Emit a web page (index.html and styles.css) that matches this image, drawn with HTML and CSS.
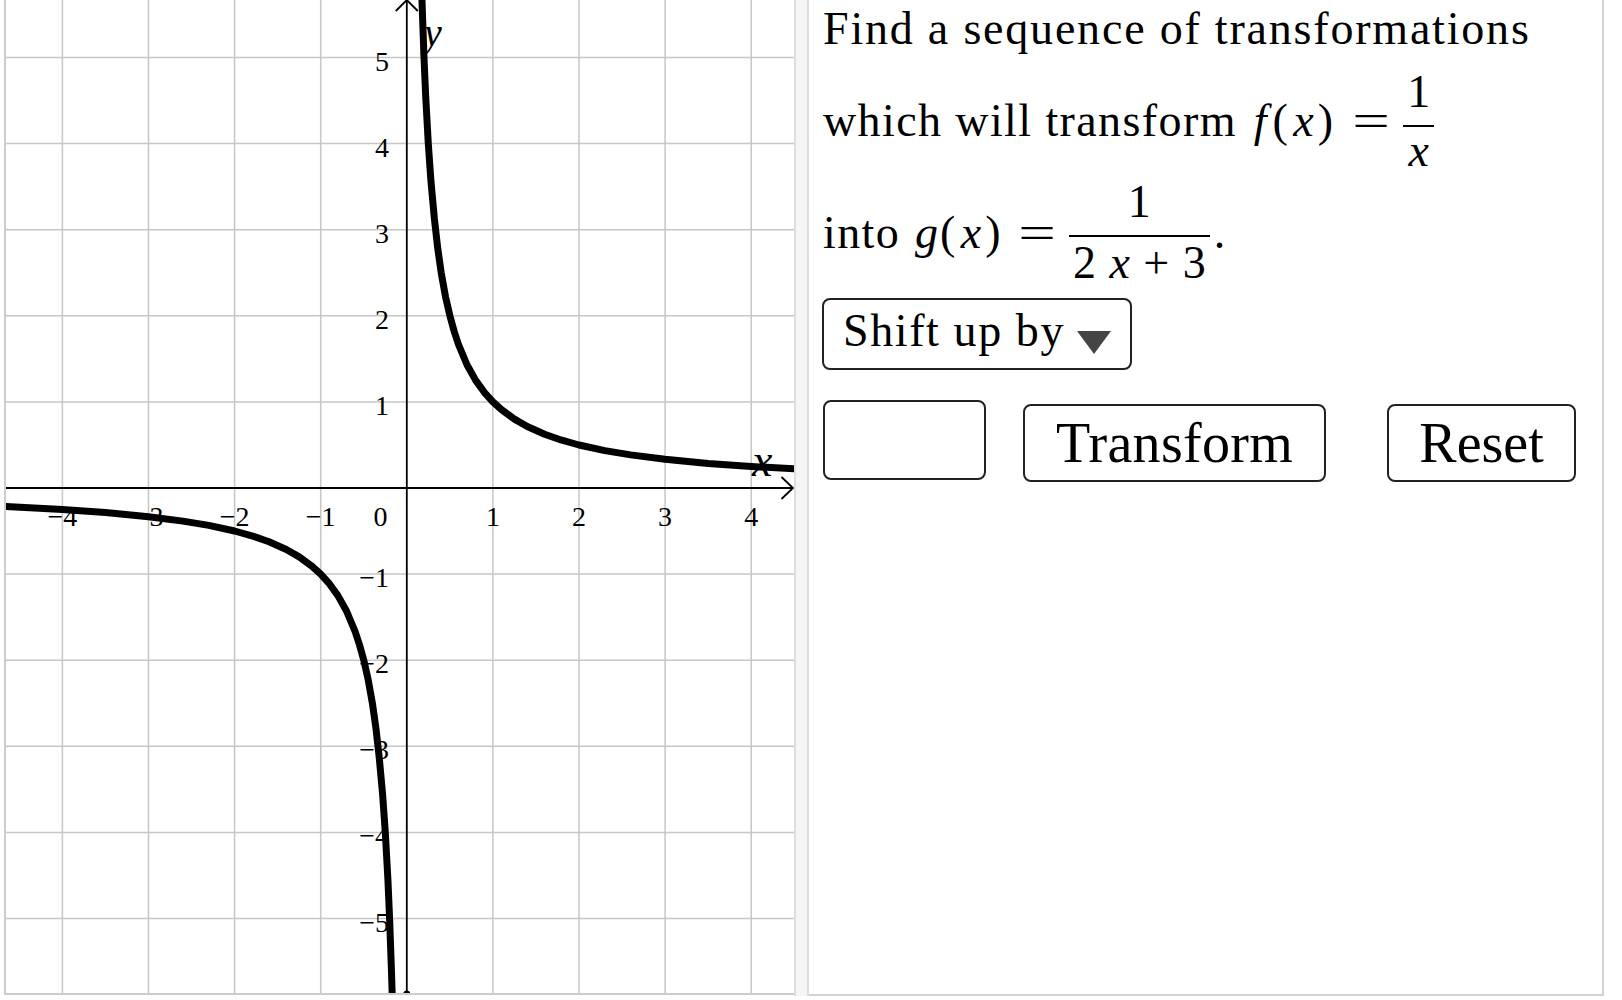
FILE: index.html
```html
<!DOCTYPE html>
<html>
<head>
<meta charset="utf-8">
<link rel="stylesheet" href="styles.css">
</head>
<body>
<div class="page">
  <div class="board">
    <svg class="board-svg" width="794" height="996" viewBox="0 0 794 996">
      <defs>
        <clipPath id="clip"><rect x="6" y="0" width="788" height="993"/></clipPath>
      </defs>
      <g clip-path="url(#clip)">
        <g class="grid">
          <line x1="62.4" y1="0" x2="62.4" y2="996"/>
          <line x1="148.5" y1="0" x2="148.5" y2="996"/>
          <line x1="234.6" y1="0" x2="234.6" y2="996"/>
          <line x1="320.7" y1="0" x2="320.7" y2="996"/>
          <line x1="492.9" y1="0" x2="492.9" y2="996"/>
          <line x1="579.0" y1="0" x2="579.0" y2="996"/>
          <line x1="665.1" y1="0" x2="665.1" y2="996"/>
          <line x1="751.2" y1="0" x2="751.2" y2="996"/>
          <line x1="0" y1="57.5" x2="794" y2="57.5"/>
          <line x1="0" y1="143.6" x2="794" y2="143.6"/>
          <line x1="0" y1="229.7" x2="794" y2="229.7"/>
          <line x1="0" y1="315.8" x2="794" y2="315.8"/>
          <line x1="0" y1="401.9" x2="794" y2="401.9"/>
          <line x1="0" y1="574.1" x2="794" y2="574.1"/>
          <line x1="0" y1="660.2" x2="794" y2="660.2"/>
          <line x1="0" y1="746.3" x2="794" y2="746.3"/>
          <line x1="0" y1="832.4" x2="794" y2="832.4"/>
          <line x1="0" y1="918.5" x2="794" y2="918.5"/>
        </g>
        <g class="axis">
          <line x1="0" y1="488" x2="793" y2="488"/>
          <polyline points="781.5,477 793,488 781.5,499"/>
          <line x1="406.8" y1="0" x2="406.8" y2="996"/>
          <polyline points="395.8,11 406.8,0 417.8,11"/>
          <circle class="dot" cx="406.8" cy="994" r="3.5"/>
        </g>
        <g class="ticks">
          <text x="389" y="70.5" text-anchor="end">5</text>
          <text x="389" y="156.6" text-anchor="end">4</text>
          <text x="389" y="242.7" text-anchor="end">3</text>
          <text x="389" y="328.8" text-anchor="end">2</text>
          <text x="389" y="414.9" text-anchor="end">1</text>
          <text x="389" y="587.1" text-anchor="end">−1</text>
          <text x="389" y="673.2" text-anchor="end">−2</text>
          <text x="389" y="759.3" text-anchor="end">−3</text>
          <text x="389" y="845.4" text-anchor="end">−4</text>
          <text x="389" y="931.5" text-anchor="end">−5</text>
          <text x="62.4" y="526" text-anchor="middle">−4</text>
          <text x="148.5" y="526" text-anchor="middle">−3</text>
          <text x="234.6" y="526" text-anchor="middle">−2</text>
          <text x="320.7" y="526" text-anchor="middle">−1</text>
          <text x="380.5" y="526" text-anchor="middle">0</text>
          <text x="492.9" y="526" text-anchor="middle">1</text>
          <text x="579.0" y="526" text-anchor="middle">2</text>
          <text x="665.1" y="526" text-anchor="middle">3</text>
          <text x="751.2" y="526" text-anchor="middle">4</text>
        </g>
        <text class="axis-label ylab" x="424" y="46">y</text>
        <text class="axis-label xlab" x="752" y="476">x</text>
        <g class="curve">
          <polyline points="421.4,-18.5 422.3,9.7 424.0,57.5 425.7,96.6 428.3,143.6 430.9,180.5 434.4,218.9 437.8,248.8 441.2,272.8 445.5,296.7 449.9,315.8 454.2,331.5 458.5,344.5 467.1,365.0 475.7,380.4 484.3,392.3 492.9,401.9 501.5,409.7 514.4,419.1 527.3,426.5 544.6,434.2 561.8,440.2 579.0,445.0 604.8,450.6 630.7,454.9 665.1,459.3 708.2,463.4 751.2,466.5 802.9,469.3"/>
          <polyline points="2.1,506.3 10.7,506.7 62.4,509.5 105.5,512.6 148.5,516.7 182.9,521.1 208.8,525.4 234.6,531.0 251.8,535.8 269.0,541.8 286.3,549.5 299.2,556.9 312.1,566.3 320.7,574.1 329.3,583.7 337.9,595.6 346.5,611.0 355.1,631.5 359.4,644.5 363.8,660.2 368.1,679.3 372.4,703.3 375.8,727.2 379.2,757.1 382.7,795.5 385.3,832.4 387.9,879.4 389.6,918.5 391.3,966.3 392.2,994.5 393.0,1026"/>
        </g>
      </g>
      <line class="frame" x1="5" y1="0" x2="5" y2="994"/>
      <line class="frame" x1="4" y1="994" x2="794" y2="994"/>
    </svg>
  </div>
  <div class="divider"></div>
  <div class="panel">
    <div class="line l1">Find a sequence of transformations</div>
    <div class="line l2">which will transform <span class="mi mf">f</span>(<span class="mi mx">x</span>)<span class="eq eq1">=</span><span class="frac fa"><span class="num">1</span><span class="den"><span class="mi">x</span></span></span></div>
    <div class="line l3">into <span class="mi mg">g</span>(<span class="mi mx">x</span>)<span class="eq eq2">=</span><span class="frac fb"><span class="num">1</span><span class="den">2 <span class="mi">x</span> + 3</span></span>.</div>
    <div class="select"><span class="select-text">Shift up by</span><span class="caret"></span></div>
    <div class="controls">
      <div class="input"></div>
      <button class="btn transform">Transform</button>
      <button class="btn reset">Reset</button>
    </div>
  </div>
</div>
</body>
</html>
```
FILE: styles.css
```css
html, body {
  margin: 0;
  padding: 0;
  background: #ffffff;
}

.page {
  display: flex;
  width: 1604px;
  height: 996px;
}

.board {
  flex: 0 0 794px;
  height: 996px;
}

.board-svg {
  display: block;
}

.grid line {
  stroke: #c6c6c6;
  stroke-width: 1.5;
}

.axis line,
.axis polyline {
  stroke: #000;
  stroke-width: 1.8;
  fill: none;
}

.axis .dot {
  fill: #000;
}

.ticks text {
  font-family: "Liberation Serif", serif;
  font-size: 28px;
  fill: #000;
}

.axis-label {
  font-family: "Liberation Serif", serif;
  font-style: italic;
  fill: #000;
}

.ylab { font-size: 40px; }
.xlab { font-size: 46px; }

.curve polyline {
  fill: none;
  stroke: #000;
  stroke-width: 7;
  stroke-linejoin: round;
}

.frame {
  stroke: #cccccc;
  stroke-width: 2;
}

.divider {
  flex: 0 0 15px;
  box-sizing: border-box;
  height: 996px;
  background: #f5f5f5;
  border-left: 2px solid #dedede;
  border-right: 2px solid #dedede;
}

.panel {
  flex: 0 0 795px;
  box-sizing: border-box;
  height: 996px;
  border-right: 2px solid #d2d2d2;
  border-bottom: 2px solid #d2d2d2;
  padding: 6px 0 0 14px;
  font-family: "Liberation Serif", serif;
  font-size: 46px;
  color: #000;
}

.line {
  line-height: 46px;
  letter-spacing: 1.4px;
  white-space: nowrap;
}

.l1 { letter-spacing: 1.8px; }
.l2 { margin-top: 16.5px; }
.l3 { margin-top: 5px; }

.mi {
  font-style: italic;
  letter-spacing: 0;
}

.mf { margin: 0 6px 0 4px; }
.mg { margin: 0 2px 0 2px; }
.mx { margin: 0 4px; }

.eq {
  display: inline-block;
  transform: scaleX(1.45);
  letter-spacing: 0;
}

.eq1 { margin: 0 19px 0 24px; }
.eq2 { margin: 0 19px 0 22px; }

.frac {
  display: inline-flex;
  flex-direction: column;
  align-items: stretch;
  text-align: center;
  margin: 0 4px 0 0;
  letter-spacing: 0;
}

.fa { vertical-align: 29px; }
.fb { vertical-align: 31px; }

.num {
  line-height: 46px;
  padding: 0 4px 10px;
}

.den {
  line-height: 46px;
  border-top: 2px solid #000;
  padding: 3px 4px 0;
}

.fa .den { padding: 1px 3px 0; }
.fb .den { padding: 3px 4px 0; word-spacing: 2px; }

.select {
  box-sizing: border-box;
  width: 310px;
  height: 72px;
  margin: 12.5px 0 0 -1px;
  border: 2px solid #222;
  border-radius: 8px;
  display: flex;
  align-items: flex-start;
  padding: 8px 0 0 19px;
  line-height: 46px;
}

.select-text {
  letter-spacing: 1.6px;
}

.caret {
  width: 0;
  height: 0;
  margin: 23px 0 0 12px;
  border-left: 17.5px solid transparent;
  border-right: 17.5px solid transparent;
  border-top: 23px solid #444;
}

.controls {
  display: flex;
  align-items: flex-start;
  margin-top: 30px;
}

.input {
  box-sizing: border-box;
  width: 163px;
  height: 80px;
  border: 2px solid #222;
  border-radius: 8px;
}

.btn {
  box-sizing: border-box;
  height: 78px;
  margin-top: 4px;
  padding: 0;
  border: 2px solid #222;
  border-radius: 8px;
  background: #fff;
  color: #000;
  font-family: "Liberation Serif", serif;
  font-size: 56px;
  line-height: 1;
}

.transform {
  width: 303px;
  margin-left: 37px;
  letter-spacing: 0.3px;
}

.reset {
  width: 189px;
  margin-left: 61px;
}
```
